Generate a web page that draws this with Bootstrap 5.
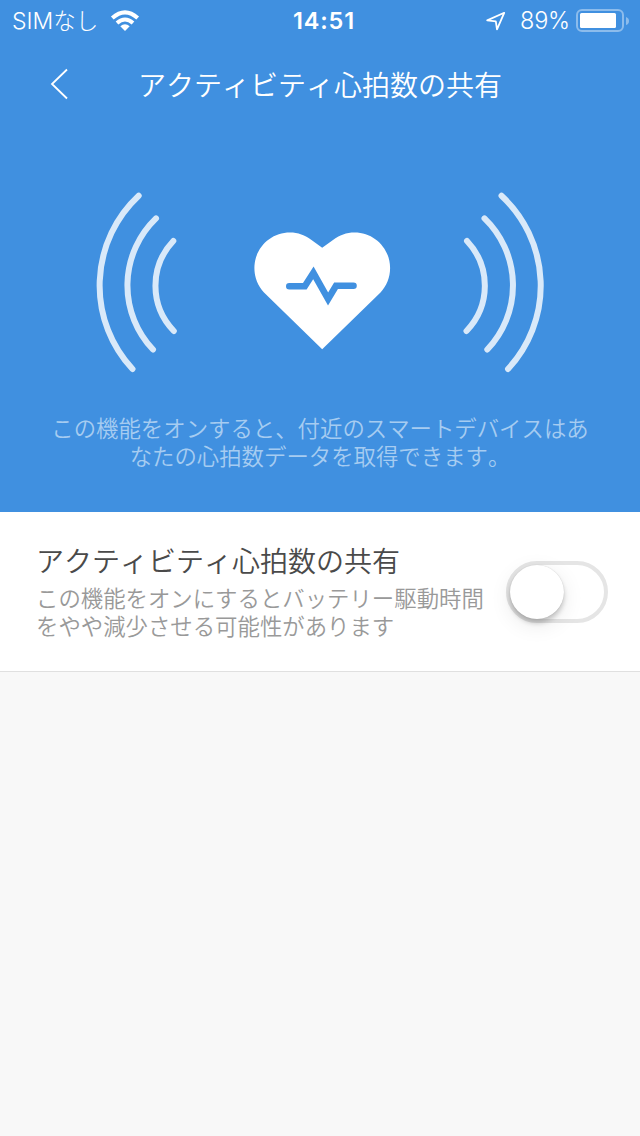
<!DOCTYPE html>
<html lang="ja">
<head>
<meta charset="utf-8">
<meta name="viewport" content="width=device-width, initial-scale=1">
<title>アクティビティ心拍数の共有</title>
<link href="https://cdn.jsdelivr.net/npm/bootstrap@5.3.0/dist/css/bootstrap.min.css" rel="stylesheet">
<style>
  body { background: #f8f8f8; font-family: Inter, "Noto Sans CJK JP", sans-serif; font-weight: 300; min-height: 1136px; font-kerning: none; }
  svg { display: block; flex: none; }
  .hero { background: #4090e0; height: 512px; }
  .status-bar { display: grid; grid-template-columns: 240px 144px 1fr; height: 40px; padding: 1px 11px 0 12px; font-size: 23.5px; line-height: 40px; }
  .carrier { width: 98px; font-size: 23px; white-space: nowrap; }
  .carrier-kana { font-size: 22.5px; }
  .clock { font-weight: 600; letter-spacing: .8px; text-align: center; }
  .location { margin: 0 auto 0 90px; }
  .percent { width: 57px; padding-left: 1px; letter-spacing: -.2px; }
  .title-bar { display: grid; grid-template-columns: 138px 364px 138px; height: 88px; align-items: center; }
  .screen-title, .setting-title { font-family: "Noto Sans CJK JP", sans-serif; font-size: 28px; line-height: 40px; white-space: nowrap; margin: 0; }
  .screen-title { font-weight: 350; }
  .setting-title { font-weight: 350; color: #4a4a4a; }
  .copy { font-family: "Noto Sans CJK JP", sans-serif; font-weight: 350; font-size: 22.4px; line-height: 28px; margin: 0; white-space: nowrap; }
  .hero-copy { color: #a6ccf1; margin-top: 29px; }
  .setting { height: 160px; background: #fff; border-bottom: 1px solid #e0e0e0; padding: 28px 32px 0 36px; }
  .setting-copy { color: #999; margin-top: 3px; }
  .switch { width: 102px; height: 62px; border: 4px solid #e5e5e5; border-radius: 31px; background: #fff; margin-top: 21px; }
  .knob { display: block; width: 54px; height: 54px; border-radius: 50%; background: #fff; box-shadow: 0 0 1px rgba(0,0,0,.2), 0 4px 5px rgba(0,0,0,.2), 0 6px 22px rgba(0,0,0,.09); }
</style>
</head>
<body>
<header class="hero text-white">
  <div class="status-bar">
    <div class="d-flex align-items-center">
      <span class="carrier">SIM<span class="carrier-kana">なし</span></span>
      <svg width="30" height="22" viewBox="0 0 30 22" fill="none" stroke="#fff" stroke-width="4"><path d="M2.3 8.1Q15 -3.4 27.7 8.1M7 13Q15 6 23 13"/><path d="M10.3 16.2Q15 12.4 19.7 16.2L15 21Z" fill="#fff" stroke="none"/></svg>
    </div>
    <div class="clock">14:51</div>
    <div class="d-flex align-items-center">
      <svg class="location" width="20" height="20" viewBox="0 0 20 20" fill="none" stroke="#fff" stroke-width="1.8" stroke-linejoin="round"><path d="M18.2 1.8L1.2 9.4L9.8 10.3L11 18.4Z"/></svg>
      <span class="percent">89%</span>
      <svg width="53" height="24" viewBox="0 0 53 24"><rect x="1" y="1" width="46" height="21" rx="5" fill="none" stroke="#8cbcec" stroke-width="2"/><rect x="4" y="4" width="36" height="15" rx="1.5" fill="#fff"/><path d="M50 8Q53 9 53 12T50 16Z" fill="#8cbcec"/></svg>
    </div>
  </div>
  <div class="title-bar">
    <svg width="80" height="32" viewBox="0 0 80 32" fill="none" stroke="#fff" stroke-width="1.8"><path d="M67 1.5L52 16L67 30.5"/></svg>
    <h1 class="screen-title">アクティビティ心拍数の共有</h1>
  </div>
  <svg width="640" height="256" viewBox="0 128 640 256" fill="none">
    <g stroke="#d9e9f9" stroke-width="6" stroke-linecap="round">
      <path d="M138.7 195.8A122.5 122.5 0 0 0 132.5 369M156 218.4A93 93 0 0 0 153 349.5M173.3 241A65 65 0 0 0 173.8 331"/>
      <path d="M501.5 195.8A122.5 122.5 0 0 1 508 369M484.5 218.4A93 93 0 0 1 487.3 349.5M467 241A65 65 0 0 1 466.5 331"/>
    </g>
    <path d="M322.2 247.8L311.5 240C305 235 298 232.4 290 232.4C270 232.4 254.4 248.5 254.4 268C254.4 277.5 258 286 264 292.5L322.2 349.2L380.5 292.5C386.5 286 390.1 277.5 390.1 268C390.1 248.5 374.5 232.4 354.5 232.4C346.5 232.4 339.5 235 333 240Z" fill="#fff"/>
    <path d="M289.3 286.3H304.8L313.4 272.8L328.1 299L336 285.7H353.5" stroke="#4090e0" stroke-width="6.6" stroke-linecap="round" stroke-miterlimit="8"/>
  </svg>
  <p class="copy hero-copy text-center">この機能をオンすると、付近のスマートデバイスはあ<br>なたの心拍数データを取得できます。</p>
</header>
<main class="setting d-flex justify-content-between">
  <div>
    <h2 class="setting-title">アクティビティ心拍数の共有</h2>
    <p class="copy setting-copy">この機能をオンにするとバッテリー駆動時間<br>をやや減少させる可能性があります</p>
  </div>
  <button type="button" class="switch p-0" role="switch" aria-checked="false" aria-label="アクティビティ心拍数の共有"><span class="knob"></span></button>
</main>
<script src="https://cdn.jsdelivr.net/npm/bootstrap@5.3.0/dist/js/bootstrap.bundle.min.js"></script>
</body>
</html>
